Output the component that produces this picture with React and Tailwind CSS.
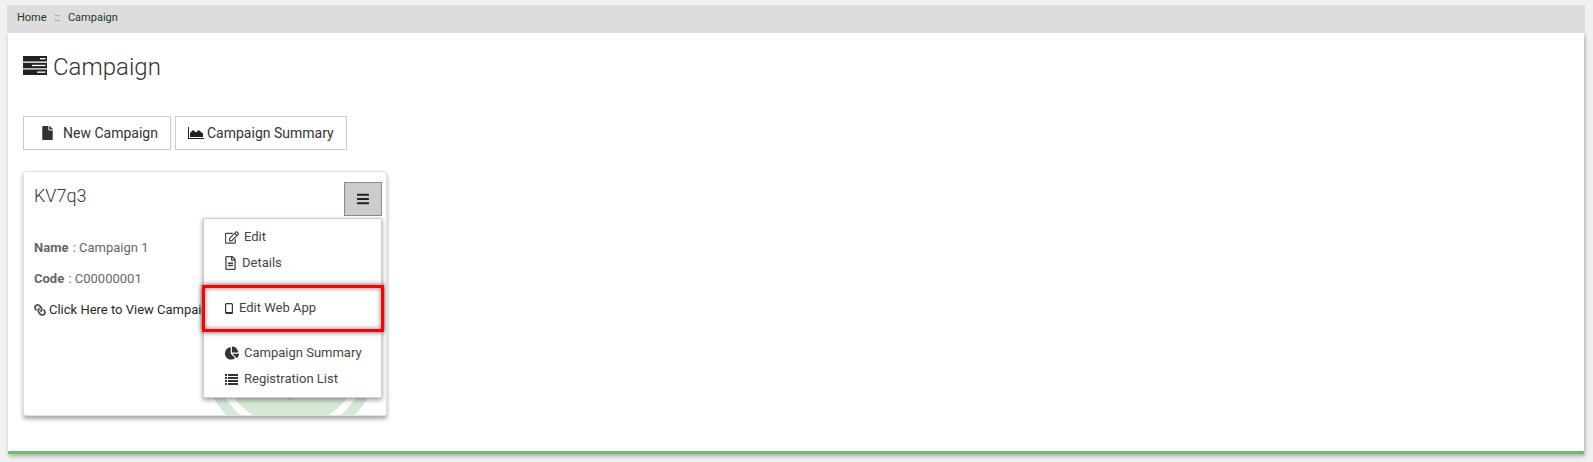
import { FaBars, FaChartPie, FaFile, FaLink, FaRegEdit, FaRegFileAlt } from 'react-icons/fa';

function TasksIcon() {
  return (
    <svg width="24" height="19" viewBox="0 0 24 19" className="mb-[3px] shrink-0">
      <rect width="24" height="5.500" y="0" fill="#222" />
      <rect x="17" y="2" width="5.500" height="1.300" fill="#fff" />
      <rect width="24" height="5.500" y="6.800" fill="#222" />
      <rect x="9" y="8.800" width="13.500" height="1.300" fill="#fff" />
      <rect width="24" height="5.500" y="13.500" fill="#222" />
      <rect x="14" y="15.500" width="8.500" height="1.300" fill="#fff" />
    </svg>
  );
}

function AreaIcon() {
  return (
    <svg width="16" height="12" viewBox="0 0 16 12" className="shrink-0">
      <path d="M0 0h1v11h15v1H0z" fill="#222" />
      <path d="M2 10V6l3-3 3 2.500L10.500 3 15 6.500V10z" fill="#222" />
    </svg>
  );
}

function ListIcon() {
  return (
    <svg width="13" height="11" viewBox="0 0 13 11" className="shrink-0">
      <path d="M0 0h2v2H0zM3 0h10v2H3zM0 3h2v2H0zM3 3h10v2H3zM0 6h2v2H0zM3 6h10v2H3zM0 9h2v2H0zM3 9h10v2H3z" fill="#333" />
    </svg>
  );
}

function TabletIcon() {
  return (
    <svg width="8" height="11" viewBox="0 0 8 11" className="shrink-0">
      <rect x="0.600" y="0.600" width="6.800" height="9.800" rx="1" fill="none" stroke="#333" strokeWidth="1.200" />
      <rect x="1" y="9" width="6" height="1" fill="#333" />
    </svg>
  );
}

function MenuRow({ icon, label, gap = 'gap-[6px]' }) {
  return (
    <div className={`flex h-[26px] items-center pl-[21px] text-[13px] text-[#444] ${gap}`}>
      {icon}
      <span>{label}</span>
    </div>
  );
}

export default function App() {
  return (
    <div className="min-h-[462px] bg-[#f1f1f1] pt-[5px] pl-[7px] pr-[8px] font-['Roboto',sans-serif]">
      {/* Breadcrumb */}
      <div className="flex h-[28px] items-center gap-[8px] border-b border-[#e8e8e8] bg-[#dddddd] pl-[10px] text-[11px] text-[#1f3a1f]">
        <span>Home</span>
        <span className="text-[#777]">::</span>
        <span>Campaign</span>
      </div>

      <div className="ml-px mr-px h-[421px] border-b-[3px] border-[#6dbf6f] bg-white pt-[22px] pl-[15px] shadow-[1px_2px_4px_rgba(0,0,0,0.3)]">
        {/* Title */}
        <div className="flex h-[24px] items-center gap-[6px]">
          <TasksIcon />
          <h1 className="text-[24px] leading-none font-light text-[#333]">Campaign</h1>
        </div>

        {/* Buttons */}
        <div className="mt-[37px] flex gap-[4px]">
          <button className="flex h-[34px] w-[148px] items-center gap-[10px] border border-[#cccccc] pl-[18px] text-[14px] text-[#333]">
            <FaFile className="h-[14px] w-[11px] text-[#333]" />
            New Campaign
          </button>
          <button className="flex h-[34px] w-[172px] items-center gap-[3px] border border-[#cccccc] pl-[12px] text-[14px] text-[#333]">
            <AreaIcon />
            Campaign Summary
          </button>
        </div>

        {/* Card */}
        <div className="relative mt-[21px] h-[245px] w-[364px] overflow-hidden rounded-[3px] border border-[#e2e2e2] bg-white pt-[10px] pl-[10px] shadow-[0_3px_4px_rgba(0,0,0,0.35)]">
          <svg width="190" height="25" viewBox="0 0 190 25" className="absolute bottom-0 left-[176px]">
            <circle cx="90.500" cy="-35" r="83" fill="none" stroke="#d5ead5" strokeWidth="10" />
            <circle cx="90.500" cy="-35" r="71" fill="#d5ead5" />
            <path d="M86 7h9l-4.500 3z" fill="#c4c4c4" />
          </svg>
          <div className="relative">
            <div className="flex items-start justify-between">
              <div className="mt-[2px] text-[18px] leading-[24px] font-light text-[#333]">KV7q3</div>
              <div className="mr-[4px] flex h-[34px] w-[38px] items-center justify-center border border-[#8c8c8c] bg-[#cccccc]">
                <FaBars className="h-[14px] w-[12px] text-[#222]" />
              </div>
            </div>
            <div className="mt-[22px] text-[13px] leading-[20px] text-[#666]">
              <b className="mr-px font-bold">Name</b> : Campaign 1
            </div>
            <div className="mt-[11px] text-[13px] leading-[20px] text-[#666]">
              <b className="mr-px font-bold">Code</b> : C00000001
            </div>
            <div className="mt-[11px] flex items-center gap-[3px] text-[13px] leading-[20px] text-[#1f2a1f]">
              <FaLink className="h-[12px] w-[12px] -scale-x-100 text-[#555]" />
              Click Here to View Campaign
            </div>
          </div>

          {/* Dropdown */}
          <div className="absolute top-[46px] left-[179px] h-[180px] w-[179px] border border-[#cfcfcf] bg-white pt-[5px] shadow-[0_2px_5px_rgba(0,0,0,0.4)]">
            <MenuRow icon={<FaRegEdit className="h-[13px] w-[14px] text-[#444]" />} label="Edit" gap="gap-[5px]" />
            <MenuRow icon={<FaRegFileAlt className="h-[14px] w-[11px] text-[#444]" />} label="Details" />
            <div className="mt-[19px]">
              <MenuRow icon={<TabletIcon />} label="Edit Web App" />
            </div>
            <div className="mt-[19px]">
              <MenuRow icon={<FaChartPie className="h-[14px] w-[14px] text-[#333]" />} label="Campaign Summary" gap="gap-[5px]" />
              <MenuRow icon={<ListIcon />} label="Registration List" />
            </div>
          </div>

          {/* Highlight annotation */}
          <div className="absolute top-[113px] left-[178px] h-[47px] w-[182px] border-[3px] border-[#ff0000] shadow-[0_0_5px_rgba(0,0,0,0.7),inset_0_0_5px_rgba(0,0,0,0.5)]" />
        </div>
      </div>
    </div>
  );
}
